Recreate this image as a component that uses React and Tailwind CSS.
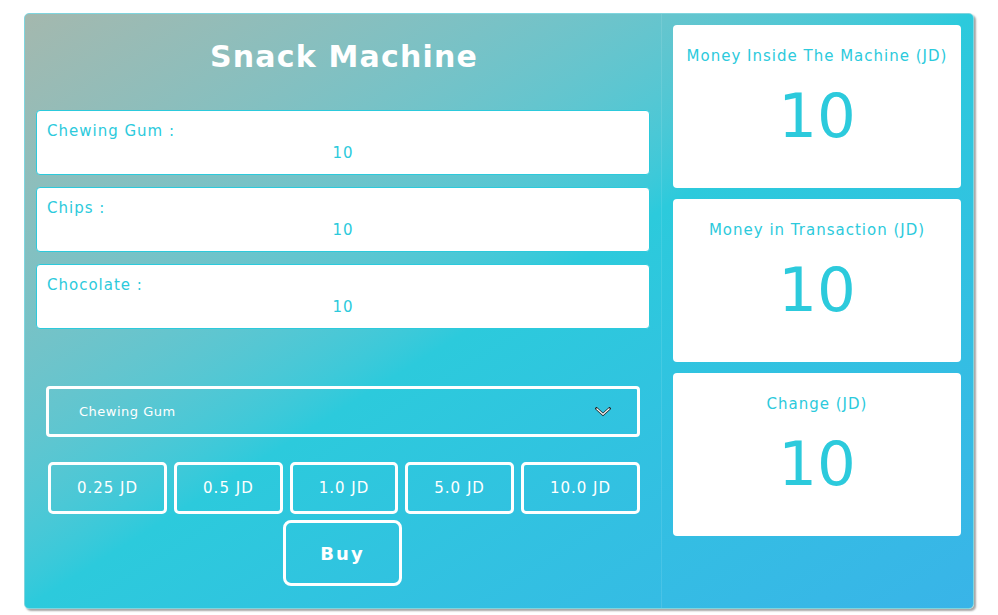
import React from "react";

const font = { fontFamily: '"DejaVu Sans", sans-serif' };

function ItemCard({ label, value }) {
  return (
    <div className="h-[65px] rounded-[4px] border border-[#2ccadc] bg-white px-[10px] pt-[10px] text-[15px] tracking-[1px] text-[#2ccadc]">
      <div className="leading-[20px]">{label}</div>
      <div className="mt-[3px] text-center leading-[18px]">{value}</div>
    </div>
  );
}

function StatCard({ title, value }) {
  return (
    <div className="flex h-[163px] flex-col items-center rounded-[4px] bg-white text-[#2ccadc]">
      <div className="mt-[21px] text-[15px] leading-[20px] tracking-[1px]">{title}</div>
      <div className="mt-[14px] text-[61px] leading-[72px]">{value}</div>
    </div>
  );
}

function CoinButton({ children }) {
  return (
    <div className="flex h-[52px] items-center justify-center rounded-[5px] border-[3px] border-white px-[26px] text-[15px] tracking-[1px] text-white">
      {children}
    </div>
  );
}

export default function App() {
  return (
    <div className="h-[615px] w-[998px] bg-white pl-[24px] pt-[13px]" style={font}>
      <div className="flex h-[596px] w-[950px] overflow-hidden rounded-[5px] border border-[#7fd5de] bg-linear-to-br from-[#a4b8ae] via-[#2ccadc] to-[#39b4e8] shadow-[2px_2px_2px_rgba(0,0,0,0.35)]">
        <div className="flex w-[636px] flex-col px-[11px]">
          <h1 className="flex h-[96px] items-center justify-center pb-[12px] pl-[2px] text-[30px] font-bold tracking-[1.2px] text-white">
            Snack Machine
          </h1>
          <div className="flex flex-col gap-[12px]">
            <ItemCard label="Chewing Gum :" value="10" />
            <ItemCard label="Chips :" value="10" />
            <ItemCard label="Chocolate :" value="10" />
          </div>
          <div className="mx-[10px] mt-[57px] flex h-[51px] items-center justify-between rounded-[4px] border-[3px] border-white pl-[30px] pr-[26px] text-[13px] tracking-[0.5px] text-white">
            <span>Chewing Gum</span>
            <svg width="16" height="10" viewBox="0 0 16 10">
              <polyline points="1.5,1.5 8,7.5 14.5,1.5" fill="none" stroke="#222" strokeWidth="2.6" strokeLinecap="square" />
              <polyline points="1.5,1.5 8,7.5 14.5,1.5" fill="none" stroke="#fff" strokeWidth="1.2" />
            </svg>
          </div>
          <div className="mt-[25px] flex justify-center gap-[7px] pl-[2px]">
            <CoinButton>0.25 JD</CoinButton>
            <CoinButton>0.5 JD</CoinButton>
            <CoinButton>1.0 JD</CoinButton>
            <CoinButton>5.0 JD</CoinButton>
            <CoinButton>10.0 JD</CoinButton>
          </div>
          <div className="mt-[6px] flex justify-center pr-[1px]">
            <div className="flex h-[66px] w-[119px] items-center justify-center rounded-[8px] border-[3px] border-white text-[18px] font-bold tracking-[2px] text-white">
              Buy
            </div>
          </div>
        </div>
        <div className="flex flex-1 flex-col gap-[11px] border-l border-white/10 pl-[11px] pr-[12px] pt-[11px]">
          <StatCard title="Money Inside The Machine (JD)" value="10" />
          <StatCard title="Money in Transaction (JD)" value="10" />
          <StatCard title="Change (JD)" value="10" />
        </div>
      </div>
    </div>
  );
}
